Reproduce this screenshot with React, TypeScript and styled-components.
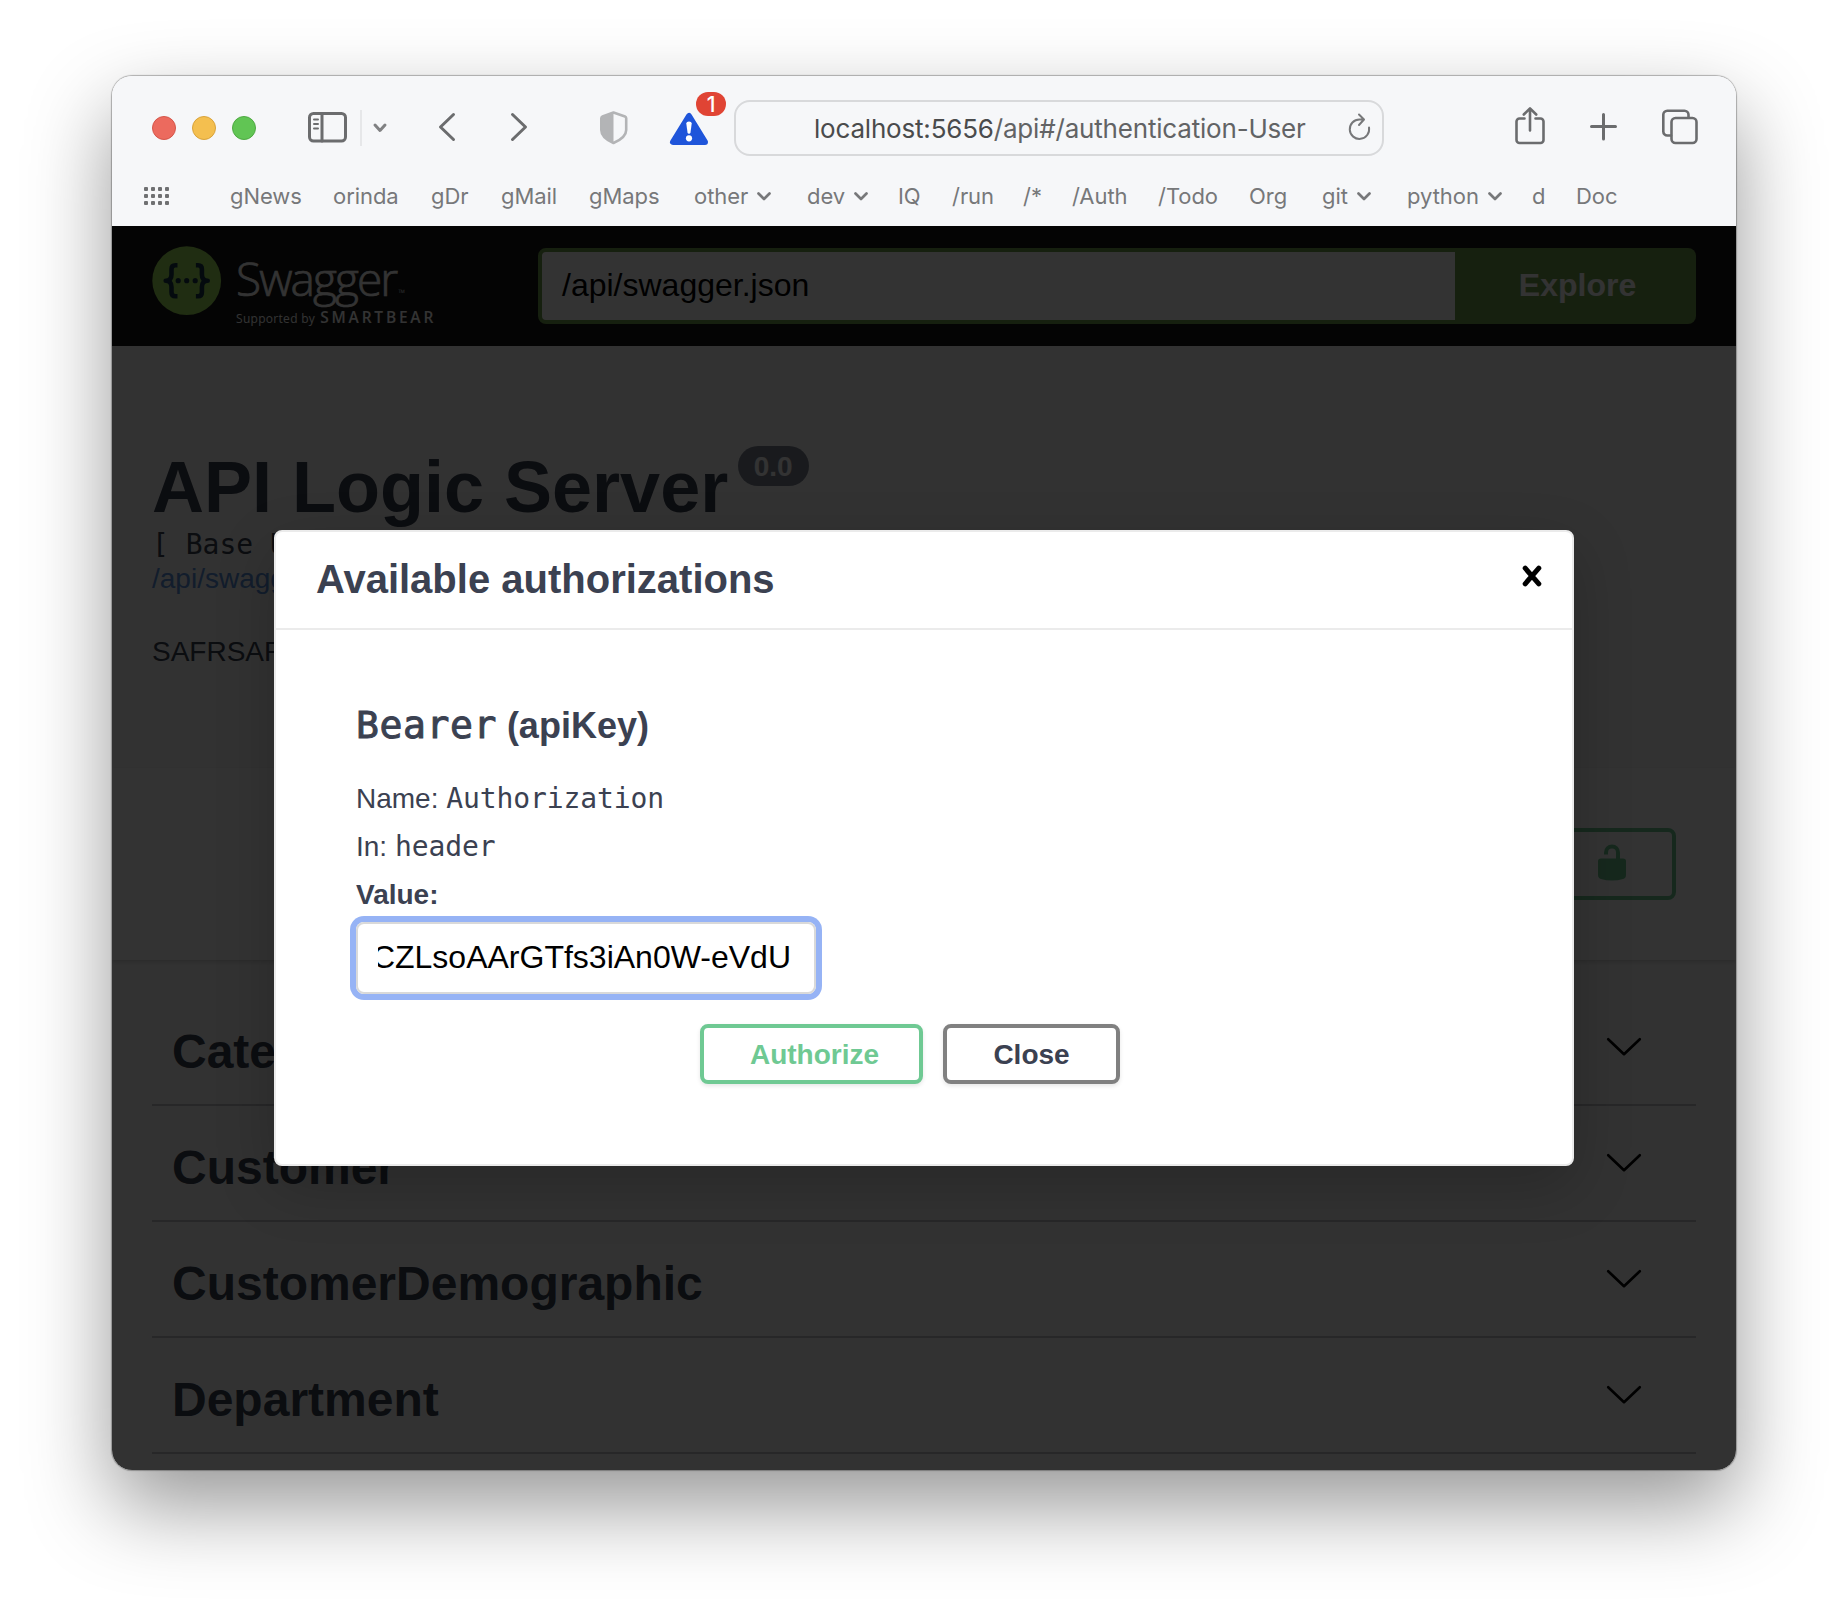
import React from "react";
import styled, { createGlobalStyle } from "styled-components";

const SANS = '"Liberation Sans", Arial, sans-serif';
const UI = 'Inter, "Noto Sans", sans-serif';
const MONO = '"DejaVu Sans Mono", monospace';
const INK = "#3b4151";

const GlobalStyle = createGlobalStyle`
  * { box-sizing: border-box; }
  body { margin: 0; background: #fff; font-family: ${SANS}; }
`;

const Desktop = styled.div`
  width: 1848px;
  height: 1618px;
  padding: 76px 112px 0;
  overflow: hidden;
`;

const BrowserWindow = styled.div`
  width: 1624px;
  height: 1394px;
  border-radius: 20px;
  box-shadow: 0 0 1px 1px rgba(0, 0, 0, 0.28), 0 36px 84px rgba(0, 0, 0, 0.41);
`;

const WindowClip = styled.div`
  height: 100%;
  border-radius: 20px;
  overflow: hidden;
  display: flex;
  flex-direction: column;
`;

/* ---------- browser chrome ---------- */

const Chrome = styled.header`
  height: 150px;
  flex: none;
  background: #f6f7f9;
  font-family: ${UI};
`;

const Toolbar = styled.div`
  height: 104px;
  display: flex;
  align-items: center;
  padding-left: 40px;
`;

const Light = styled.span<{ $fill: string; $edge: string }>`
  width: 24px;
  height: 24px;
  margin-right: 16px;
  border-radius: 50%;
  background: ${(p) => p.$fill};
  border: 1px solid ${(p) => p.$edge};
`;

const Glyph = styled.svg<{ $before?: number; $after?: number }>`
  flex: none;
  display: block;
  height: 44px;
  margin-left: ${(p) => p.$before ?? 0}px;
  margin-right: ${(p) => p.$after ?? 0}px;
  overflow: visible;
  fill: none;
  stroke: #6b6c6e;
  stroke-linecap: round;
  stroke-linejoin: round;
`;

const Divider = styled.span`
  width: 2px;
  height: 36px;
  margin-left: 13px;
  background: #e6e7e9;
`;

const AlertSlot = styled.div`
  position: relative;
  margin-left: 42px;
`;

const AlertCount = styled.span`
  position: absolute;
  left: 26px;
  top: -14px;
  width: 30px;
  height: 24px;
  border-radius: 12px;
  background: #e04434;
  color: #fff;
  font-size: 21px;
  font-weight: 500;
  line-height: 25px;
  text-align: center;
`;

const AddressBar = styled.div`
  width: 650px;
  height: 56px;
  margin-left: 26px;
  padding: 0 12px 0 78px;
  display: flex;
  align-items: center;
  border: 2px solid #d8d9db;
  border-radius: 16px;
`;

const Url = styled.span`
  flex: 1;
  padding-top: 2px;
  font-size: 26px;
  line-height: 40px;
  letter-spacing: -0.19px;
  white-space: nowrap;
  color: #626365;
`;

const Host = styled.span`
  color: #4a4b4c;
`;

const Bookmarks = styled.nav`
  height: 32px;
  display: flex;
  align-items: center;
  padding-left: 32px;
`;

const Bookmark = styled.span<{ $w: number }>`
  width: ${(p) => p.$w}px;
  flex: none;
  display: flex;
  align-items: center;
  gap: 8px;
  font-size: 22px;
  line-height: 32px;
  letter-spacing: -0.05px;
  white-space: nowrap;
  color: #77787a;
`;

/* ---------- swagger page ---------- */

const Page = styled.main`
  position: relative;
  flex: 1;
  overflow: hidden;
  background: #fafafa;
  color: ${INK};
`;

const Topbar = styled.div`
  height: 120px;
  display: flex;
  align-items: center;
  padding: 0 40px;
  background: #161616;
`;

const Logo = styled.div`
  width: 386px;
  height: 80px;
  display: flex;
  color: #fff;
  font-family: "Open Sans", sans-serif;
`;

const LogoWords = styled.div`
  margin: 9px 0 0 14px;
`;

const Wordmark = styled.div`
  height: 50px;
  display: flex;
  align-items: flex-end;
  font-size: 46px;
  line-height: 54px;
  font-weight: 300;
  letter-spacing: -1.9px;
  -webkit-text-stroke: 0.7px #fff;
`;

const TradeMark = styled.span`
  font-size: 9px;
  line-height: 24px;
  letter-spacing: 0;
  margin-left: 2px;
  -webkit-text-stroke: 0;
`;

const Byline = styled.div`
  display: flex;
  align-items: baseline;
  gap: 5px;
  margin-top: -1px;
  font-size: 12px;
  line-height: 26px;
  letter-spacing: 0.3px;
  white-space: nowrap;
`;

const Smartbear = styled.span`
  font-size: 15.5px;
  font-weight: 600;
  letter-spacing: 2.8px;
`;

const SpecField = styled.div`
  width: 922px;
  height: 76px;
  display: flex;
  align-items: center;
  padding: 0 0 2px 20px;
  border: 4px solid #709e4b;
  border-right-width: 5px;
  border-radius: 8px 0 0 8px;
  background: #fff;
  color: #000;
  font-size: 32px;
`;

const Explore = styled.button`
  width: 236px;
  height: 76px;
  padding: 0 1px 1px 0;
  border: 0;
  border-radius: 0 8px 8px 0;
  background: #709e4b;
  color: #fff;
  font: bold 32px ${SANS};
`;

const Info = styled.section`
  height: 422px;
  padding: 105px 40px 0;
`;

const TitleRow = styled.div`
  display: flex;
  align-items: flex-start;
`;

const Title = styled.h2`
  margin: 0;
  font-size: 72px;
  line-height: 72px;
`;

const Version = styled.span`
  width: 71px;
  height: 40px;
  margin: -5px 0 0 10px;
  padding-right: 1px;
  border-radius: 20px;
  background: #7d8492;
  color: #fff;
  font-size: 28px;
  font-weight: bold;
  line-height: 41px;
  text-align: center;
`;

const BaseUrl = styled.pre`
  margin: 4px 0 0;
  font: 28px/36px ${MONO};
`;

const SpecLink = styled.a`
  display: block;
  font-size: 28px;
  line-height: 32px;
  color: #5990dc;
`;

const Description = styled.p`
  margin: 37px 0 0;
  font-size: 28px;
  line-height: 40px;
`;

const SchemeBar = styled.section`
  height: 192px;
  display: flex;
  align-items: center;
  justify-content: flex-end;
  padding-right: 60px;
  background: #fff;
  box-shadow: 0 2px 4px rgba(0, 0, 0, 0.15);
`;

const AuthorizeBadge = styled.div`
  height: 72px;
  display: flex;
  align-items: center;
  gap: 32px;
  padding: 0 46px 3px 40px;
  border: 4px solid #6fc993;
  border-radius: 8px;
  color: #6fc993;
  font-size: 28px;
  font-weight: bold;
`;

const Tags = styled.section`
  margin: 30px 40px 0;
`;

const TagRow = styled.div`
  height: 116px;
  display: flex;
  align-items: center;
  justify-content: space-between;
  padding: 0 52px 0 20px;
  border-bottom: 2px solid rgba(59, 65, 81, 0.3);
`;

const TagName = styled.h3`
  margin: 0;
  padding-top: 9px;
  font-size: 48px;
  line-height: 56px;
`;

/* ---------- dialog ---------- */

const Backdrop = styled.div`
  position: absolute;
  inset: 0;
  display: flex;
  align-items: flex-start;
  justify-content: center;
  padding-top: 304px;
  background: rgba(0, 0, 0, 0.8);
`;

const Dialog = styled.div`
  width: 1300px;
  height: 636px;
  border: 2px solid #ebebeb;
  border-radius: 8px;
  background: #fff;
  box-shadow: 0 20px 60px rgba(0, 0, 0, 0.2);
`;

const DialogHeader = styled.div`
  height: 98px;
  display: flex;
  align-items: center;
  justify-content: space-between;
  padding: 0 30px 0 40px;
  border-bottom: 2px solid #ebebeb;
`;

const DialogTitle = styled.h3`
  margin: 0;
  padding-bottom: 2px;
  font-size: 40px;
  line-height: 48px;
`;

const CloseGlyph = styled.svg`
  margin-top: -8px;
  stroke: #000;
  stroke-width: 5;
  stroke-linecap: round;
`;

const DialogBody = styled.div`
  padding: 74px 80px 0;
`;

const SchemeName = styled.h4`
  margin: 0 0 27px;
  font-size: 36px;
  line-height: 44px;
  white-space: pre;
`;

const SchemeCode = styled.code`
  font: 38px/40px ${MONO};
  letter-spacing: 0.6px;
  -webkit-text-stroke: 1px ${INK};
`;

const Field = styled.div<{ $bold?: boolean }>`
  height: 48px;
  font-size: 28px;
  line-height: 48px;
  font-weight: ${(p) => (p.$bold ? "bold" : "normal")};
`;

const Code = styled.code`
  font: 28px/40px ${MONO};
  letter-spacing: -0.1px;
`;

const TokenInput = styled.div`
  width: 460px;
  height: 72px;
  margin-top: 3px;
  padding: 0 23px 0 20px;
  display: flex;
  align-items: center;
  border: 2px solid #d9d9d9;
  border-radius: 8px;
  box-shadow: 0 0 0 6px #96b3f5;
`;

const TokenView = styled.div`
  flex: 1;
  min-width: 0;
  display: flex;
  justify-content: flex-end;
  overflow: hidden;
  color: #000;
  font-size: 32px;
  line-height: 40px;
  white-space: nowrap;
  padding-bottom: 3px;
`;

const Actions = styled.div`
  display: flex;
  gap: 20px;
  margin: 30px 0 0 344px;
`;

const ActionButton = styled.button<{ $w: number; $edge: string; $ink: string; $indent?: number }>`
  width: ${(p) => p.$w}px;
  height: 60px;
  padding: 1px 0 0 ${(p) => p.$indent ?? 0}px;
  border: 4px solid ${(p) => p.$edge};
  border-radius: 8px;
  background: #fff;
  box-shadow: 0 2px 4px rgba(0, 0, 0, 0.1);
  color: ${(p) => p.$ink};
  font: bold 28px ${SANS};
  white-space: nowrap;
`;

const bookmarks: { label: string; w: number; menu?: boolean }[] = [
  { label: "gNews", w: 103 },
  { label: "orinda", w: 98 },
  { label: "gDr", w: 70 },
  { label: "gMail", w: 88 },
  { label: "gMaps", w: 105 },
  { label: "other", w: 113, menu: true },
  { label: "dev", w: 91, menu: true },
  { label: "IQ", w: 54 },
  { label: "/run", w: 71 },
  { label: "/*", w: 49 },
  { label: "/Auth", w: 86 },
  { label: "/Todo", w: 91 },
  { label: "Org", w: 73 },
  { label: "git", w: 85, menu: true },
  { label: "python", w: 125, menu: true },
  { label: "d", w: 44 },
  { label: "Doc", w: 50 },
];

const tags = ["Category", "Customer", "CustomerDemographic", "Department"];

const MenuChevron = () => (
  <svg width="15" height="10" viewBox="-1 0 15 10" fill="none" stroke="#77787a" strokeWidth="2.700" strokeLinecap="round" strokeLinejoin="round">
    <path d="M1.500 2.500L7 8l5.500-5.500" />
  </svg>
);

const SwaggerMark = () => (
  <svg width="70" height="70" viewBox="0 0 70 70" fill="none">
    <circle cx="34.700" cy="34.700" r="34.400" fill="#a0e05a" />
    <g stroke="#173647" strokeWidth="4.600" strokeLinejoin="round">
      <path d="M25.500 19.200h-2.200q-3.800 0-3.800 4v5.200q0 6.300-5.800 6.300 5.800 0 5.800 6.300v5.200q0 4 3.800 4h2.200" />
      <path d="M43.900 19.200h2.200q3.800 0 3.800 4v5.200q0 6.300 5.800 6.300-5.800 0-5.800 6.300v5.200q0 4-3.800 4h-2.200" />
    </g>
    <g fill="#173647">
      <circle cx="26.200" cy="34.700" r="2.600" />
      <circle cx="34.700" cy="34.700" r="2.600" />
      <circle cx="43.200" cy="34.700" r="2.600" />
    </g>
  </svg>
);

export default function App() {
  return (
    <>
      <GlobalStyle />
      <Desktop>
        <BrowserWindow>
          <WindowClip>
            <Chrome>
              <Toolbar>
                <Light $fill="#ec6a5e" $edge="#d5564a" />
                <Light $fill="#f4bf4f" $edge="#d9a33b" />
                <Light $fill="#61c554" $edge="#4fa943" />
                <Glyph $before={36} width="39" viewBox="0 0 39 44" strokeWidth="3">
                  <rect x="1.500" y="7.500" width="36" height="27.500" rx="4" />
                  <path d="M14 7.500v27.500" />
                  <path d="M6 13.500h4M6 18h4M6 22.500h4" strokeWidth="2" />
                </Glyph>
                <Divider />
                <Glyph $before={11} width="14" viewBox="0 0 14 44" strokeWidth="3">
                  <path d="M2 19l5 5.500 5-5.500" stroke="#808183" />
                </Glyph>
                <Glyph $before={52} width="16" viewBox="0 0 16 44" strokeWidth="3">
                  <path d="M14.500 8.500L1.500 21l13 12.500" />
                </Glyph>
                <Glyph $before={56} width="16" viewBox="0 0 16 44" strokeWidth="3">
                  <path d="M1.500 8.500L14.500 21l-13 12.500" />
                </Glyph>
                <Glyph $before={73} width="28" viewBox="0 0 28 44" strokeWidth="2.600">
                  <path d="M13.500 6.500L25 10.500q1.200.5 1.200 1.800V24c0 6-4.500 9.500-12.700 13C5.300 33.500 1.300 30 1.300 24V12.300q0-1.300 1.200-1.800z" stroke="#b3b4b6" />
                  <path d="M13.500 6.500L2.500 10.500q-1.200.5-1.200 1.800V24c0 6 4 9.500 12.200 13z" fill="#b3b4b6" stroke="none" />
                </Glyph>
                <AlertSlot>
                  <Glyph width="38" viewBox="0 0 38 44">
                    <path d="M19 10L3 36h32z" fill="#1f55da" stroke="#1f55da" strokeWidth="6" />
                    <path d="M16.300 17.500q0-2 2.700-2t2.700 2l-1.200 9q-.2 1.200-1.500 1.200t-1.500-1.200z" fill="#fff" stroke="none" />
                    <circle cx="19" cy="32.300" r="3.100" fill="#fff" stroke="none" />
                  </Glyph>
                  <AlertCount>1</AlertCount>
                </AlertSlot>
                <AddressBar>
                  <Url>
                    <Host>localhost:5656</Host>/api#/authentication-User
                  </Url>
                  <Glyph width="21" viewBox="0 0 21 44" strokeWidth="2">
                    <path d="M20 21.500A9.700 9.700 0 1 1 10.500 13.500h4M10 8.500l5 5-5 5.500" stroke="#77787a" />
                  </Glyph>
                </AddressBar>
                <Glyph $before={131} width="30" viewBox="0 0 30 44" strokeWidth="2.600">
                  <path d="M9.500 12.500H4.500a3 3 0 0 0-3 3v18.500a3 3 0 0 0 3 3h21a3 3 0 0 0 3-3V15.500a3 3 0 0 0-3-3h-5M15 24.500V2.500M8.800 8.500L15 2.300l6.200 6.200" />
                </Glyph>
                <Glyph $before={45} width="27" viewBox="0 0 27 44" strokeWidth="3">
                  <path d="M1.500 20.500h24M13.500 8.500v24.500" />
                </Glyph>
                <Glyph $before={45} width="36" viewBox="0 0 36 44" strokeWidth="2.600">
                  <rect x="9.500" y="12" width="25" height="25" rx="4" />
                  <path d="M9 29.500H5.300a4 4 0 0 1-4-4V8.700a4 4 0 0 1 4-4H22.500a4 4 0 0 1 4 4V11.500" />
                </Glyph>
              </Toolbar>
              <Bookmarks>
                <Glyph $after={60} width="26" viewBox="0 0 26 44">
                  {[0, 1, 2].map((r) =>
                    [0, 1, 2, 3].map((c) => (
                      <rect key={`${r}-${c}`} x={c * 7} y={13 + r * 7} width="4" height="4" rx="1" fill="#6f7072" stroke="none" />
                    ))
                  )}
                </Glyph>
                {bookmarks.map((b) => (
                  <Bookmark key={b.label} $w={b.w}>
                    {b.label}
                    {b.menu && <MenuChevron />}
                  </Bookmark>
                ))}
              </Bookmarks>
            </Chrome>

            <Page>
              <Topbar>
                <Logo>
                  <SwaggerMark />
                  <LogoWords>
                    <Wordmark>
                      Swagger<TradeMark>™</TradeMark>
                    </Wordmark>
                    <Byline>
                      Supported by <Smartbear>SMARTBEAR</Smartbear>
                    </Byline>
                  </LogoWords>
                </Logo>
                <SpecField>/api/swagger.json</SpecField>
                <Explore>Explore</Explore>
              </Topbar>

              <Info>
                <TitleRow>
                  <Title>API Logic Server</Title>
                  <Version>0.0</Version>
                </TitleRow>
                <BaseUrl>[ Base U</BaseUrl>
                <SpecLink>/api/swagger</SpecLink>
                <Description>SAFRSAPI</Description>
              </Info>

              <SchemeBar>
                <AuthorizeBadge>
                  Authorize
                  <svg width="28" height="37" viewBox="0 0 28 37" fill="#6fc993">
                    <path d="M3 14.500h22q3 0 3 2.500V31q0 3-3 4-5 1.500-11 1.500T3 35q-3-1-3-4V17Q0 14.500 3 14.500z" />
                    <path d="M8 10.500V8.500a6 6 0 0 1 12 0V15" fill="none" stroke="#6fc993" strokeWidth="4" />
                  </svg>
                </AuthorizeBadge>
              </SchemeBar>

              <Tags>
                {tags.map((t) => (
                  <TagRow key={t}>
                    <TagName>{t}</TagName>
                    <svg width="40" height="40" viewBox="0 0 40 40" fill="none" stroke="#000" strokeWidth="2.600" strokeLinecap="round" strokeLinejoin="round">
                      <path d="M4.200 12.200L20 27.200 35.800 12.200" />
                    </svg>
                  </TagRow>
                ))}
              </Tags>

              <Backdrop>
                <Dialog>
                  <DialogHeader>
                    <DialogTitle>Available authorizations</DialogTitle>
                    <CloseGlyph width="20" height="22" viewBox="0 0 20 22">
                      <path d="M3.200 3.200L16.800 18.800M16.800 3.200L3.200 18.800" />
                    </CloseGlyph>
                  </DialogHeader>
                  <DialogBody>
                    <SchemeName>
                      <SchemeCode>Bearer</SchemeCode> (apiKey)
                    </SchemeName>
                    <Field>
                      Name: <Code>Authorization</Code>
                    </Field>
                    <Field>
                      In: <Code>header</Code>
                    </Field>
                    <Field $bold>Value:</Field>
                    <TokenInput>
                      <TokenView>CZLsoAArGTfs3iAn0W-eVdU</TokenView>
                    </TokenInput>
                    <Actions>
                      <ActionButton $w={223} $edge="#6fc993" $ink="#6fc993" $indent={6}>
                        Authorize
                      </ActionButton>
                      <ActionButton $w={177} $edge="#808080" $ink={INK}>
                        Close
                      </ActionButton>
                    </Actions>
                  </DialogBody>
                </Dialog>
              </Backdrop>
            </Page>
          </WindowClip>
        </BrowserWindow>
      </Desktop>
    </>
  );
}
